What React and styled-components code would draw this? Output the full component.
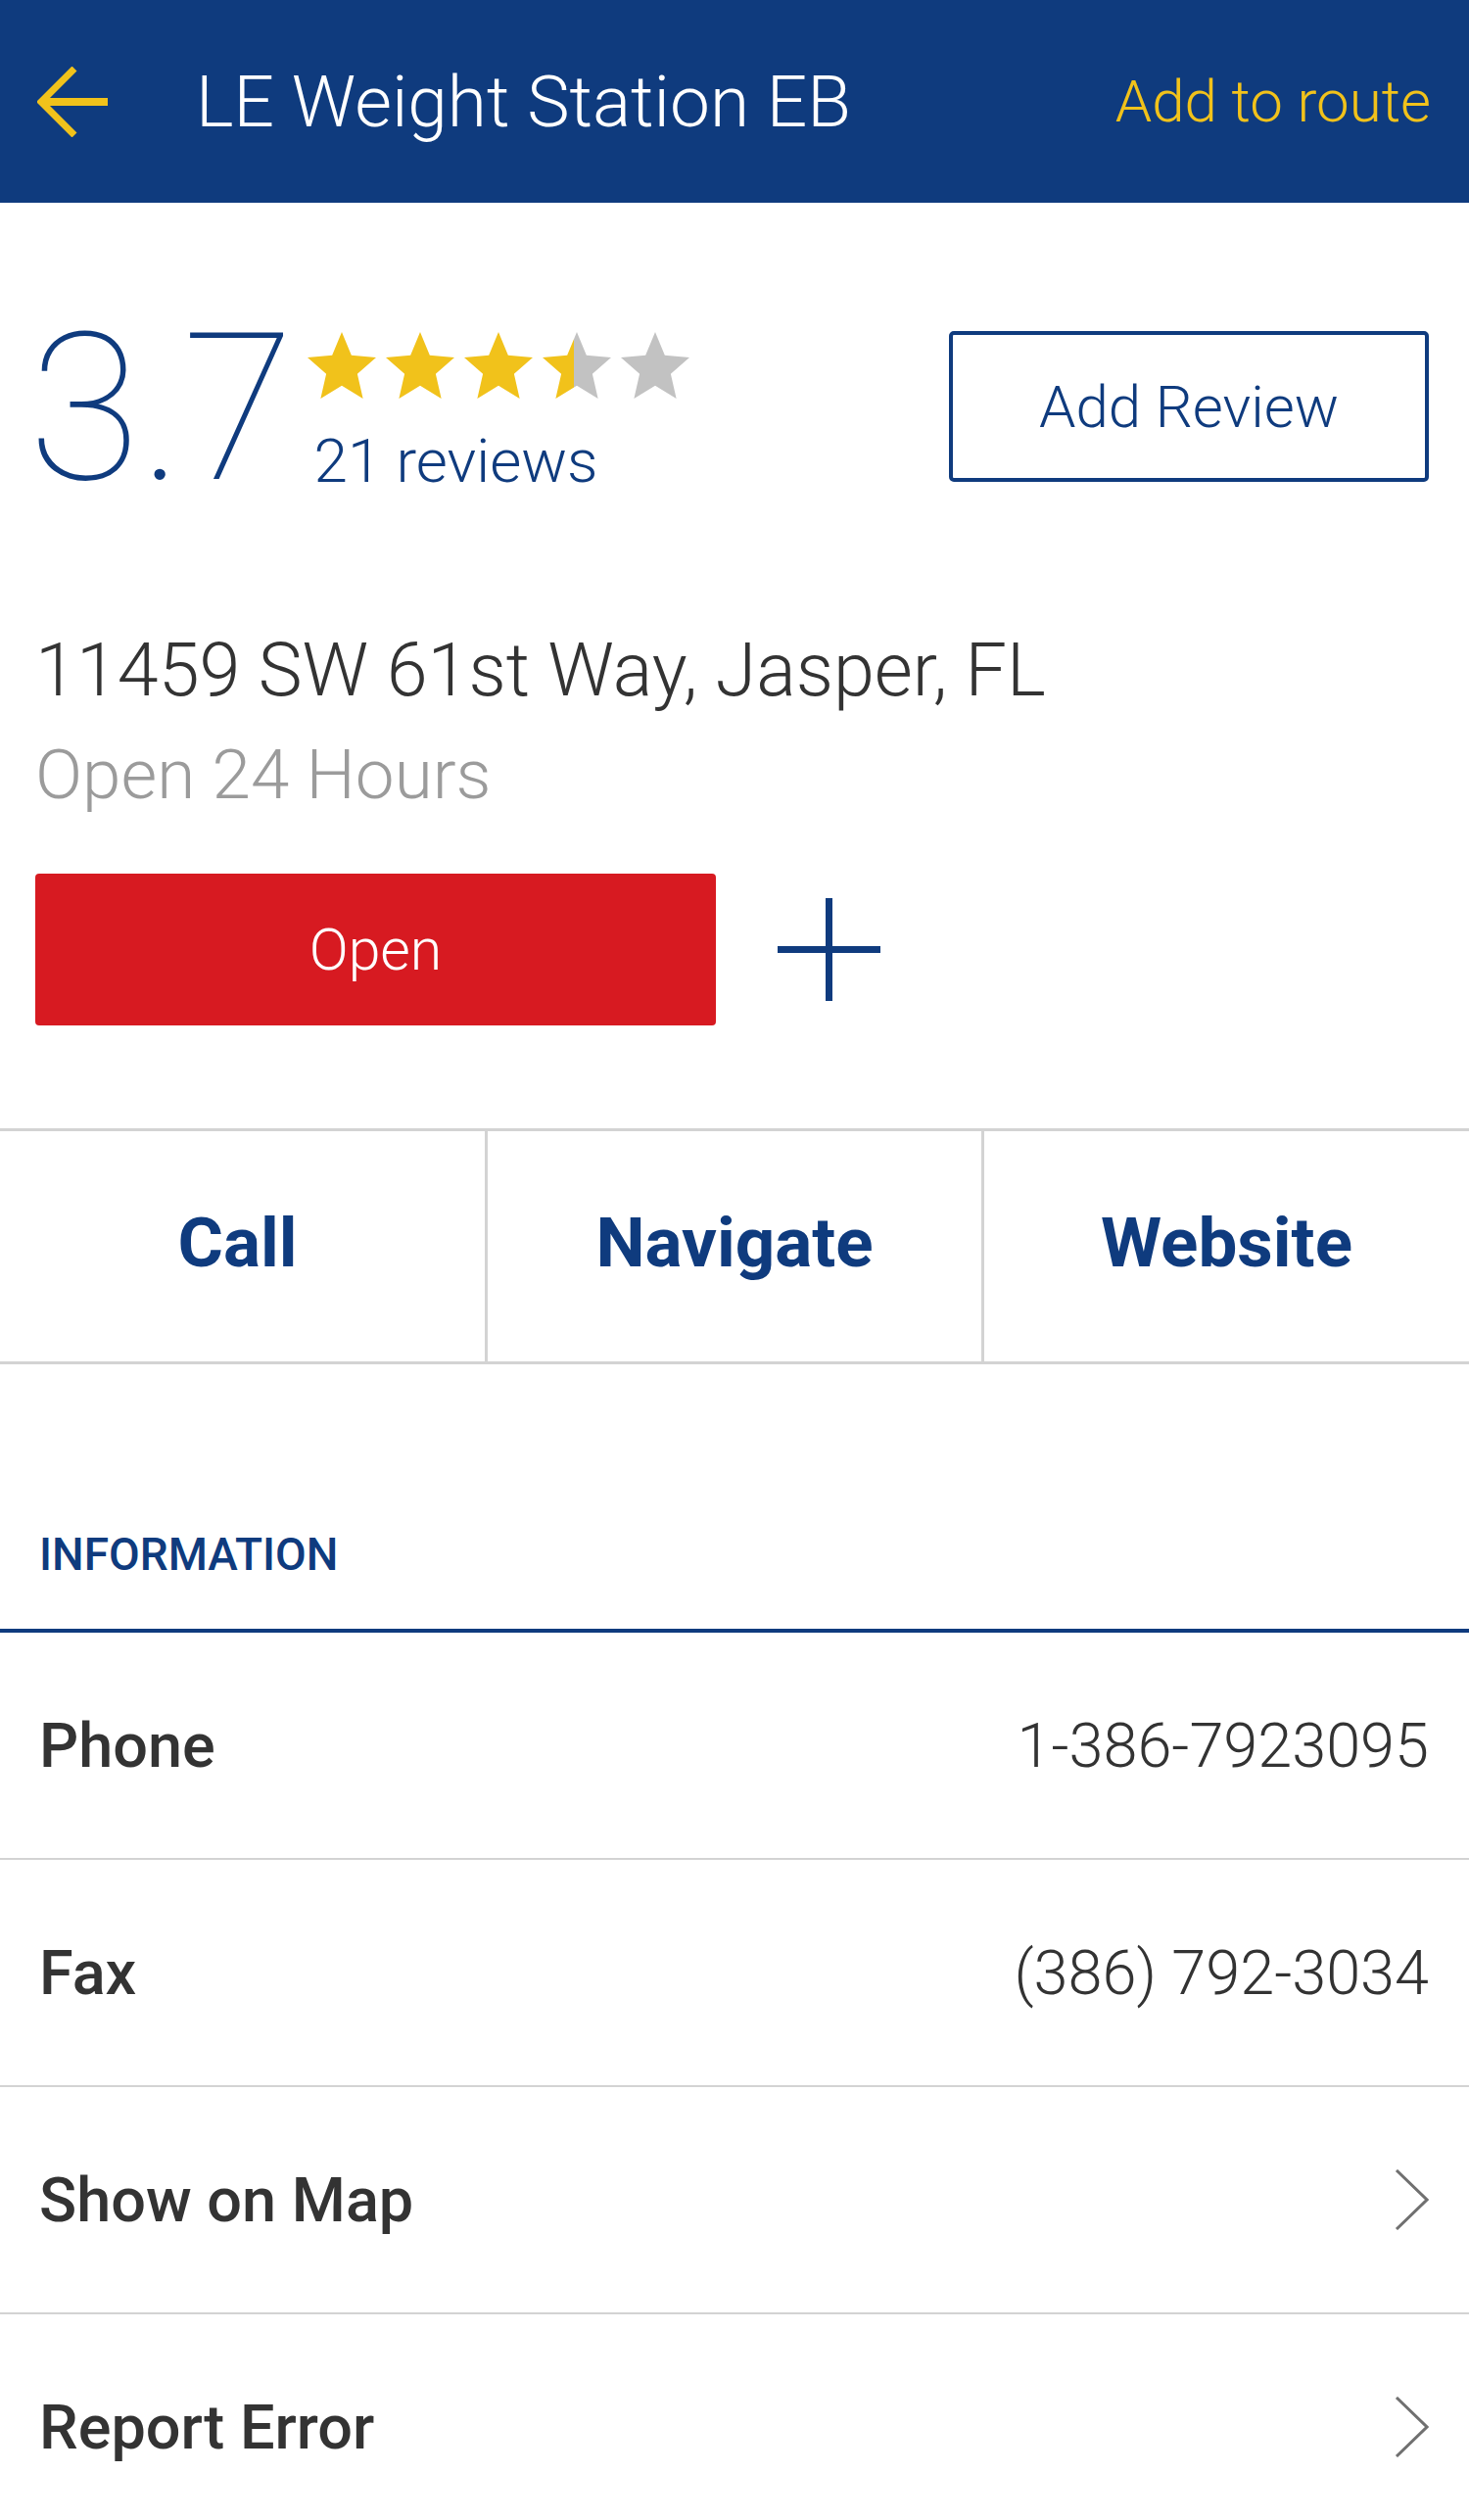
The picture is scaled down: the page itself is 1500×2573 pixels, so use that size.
import React from "react";
import styled, { createGlobalStyle } from "styled-components";

const BLUE = "#0f3b7e";
const YELLOW = "#f1c21b";
const GREY_LINE = "#d3d3d3";
const TEXT = "#333333";

const GlobalStyle = createGlobalStyle`
	body {
		margin: 0;
		background: #ffffff;
		font-family: Roboto, "Liberation Sans", sans-serif;
	}
`;

const Page = styled("div")`
	width: 1500px;
	background: #ffffff;
`;

const Header = styled("header")`
	height: 207px;
	background: ${BLUE};
	display: flex;
	align-items: center;
	padding: 0 39px 0 38px;
	box-sizing: border-box;
`;

const BackIcon = styled("svg")`
	width: 72px;
	height: 72px;
	margin-right: 90px;
	flex-shrink: 0;
`;

const Title = styled("h1")`
	flex: 1;
	margin: 0;
	color: #ffffff;
	font-size: 73px;
	font-weight: 300;
	white-space: nowrap;
`;

const RouteLink = styled("span")`
	color: ${YELLOW};
	font-size: 60px;
	font-weight: 300;
	white-space: nowrap;
`;

const Summary = styled("section")`
	padding: 103px 41px 0 36px;
`;

const RatingRow = styled("div")`
	display: flex;
	justify-content: space-between;
	align-items: flex-start;
`;

const RatingGroup = styled("div")`
	display: flex;
	align-items: flex-start;
`;

const Score = styled("div")`
	margin-left: -7px;
	color: ${BLUE};
	font-size: 209px;
	line-height: 216px;
	font-weight: 100;
	letter-spacing: -1px;
`;

const StarsBlock = styled("div")`
	margin-top: 29px;
	margin-left: 14px;
`;

const StarRow = styled("div")`
	display: flex;
	gap: 10px;
`;

const ReviewCount = styled("div")`
	margin-top: 33px;
	padding-left: 7px;
	color: ${BLUE};
	font-size: 62px;
	line-height: 62px;
	font-weight: 300;
`;

const AddReviewButton = styled("button")`
	margin-top: 28px;
	width: 490px;
	height: 154px;
	border: 4px solid ${BLUE};
	border-radius: 5px;
	background: #ffffff;
	color: ${BLUE};
	font-family: Roboto, sans-serif;
	font-size: 60px;
	font-weight: 300;
`;

const Address = styled("div")`
	margin-top: 116px;
	color: ${TEXT};
	font-size: 75.5px;
	line-height: 84px;
	font-weight: 300;
`;

const Hours = styled("div")`
	margin-top: 23px;
	color: #9b9b9b;
	font-size: 71px;
	line-height: 84px;
	font-weight: 300;
`;

const StatusRow = styled("div")`
	margin-top: 59px;
	display: flex;
	align-items: center;
	gap: 63px;
`;

const StatusButton = styled("button")`
	width: 695px;
	height: 155px;
	border: none;
	border-radius: 4px;
	background: #d71a21;
	color: #ffffff;
	font-family: Roboto, sans-serif;
	font-size: 59px;
	font-weight: 300;
`;

const PlusIcon = styled("svg")`
	width: 105px;
	height: 105px;
`;

const ActionBar = styled("nav")`
	margin-top: 105px;
	height: 241px;
	box-sizing: border-box;
	display: grid;
	grid-template-columns: 495px 507px 1fr;
	border-top: 3px solid ${GREY_LINE};
	border-bottom: 3px solid ${GREY_LINE};
`;

const ActionCell = styled("div")`
	display: flex;
	align-items: center;
	justify-content: center;
	padding-bottom: 8px;
	color: ${BLUE};
	font-size: 71px;
	font-weight: 700;

	&:first-child {
		padding-right: 10px;
	}

	& + & {
		border-left: 3px solid ${GREY_LINE};
	}
`;

const SectionTitle = styled("h2")`
	margin: 0;
	padding: 168px 41px 50px 40px;
	color: ${BLUE};
	font-size: 46px;
	line-height: 52px;
	font-weight: 500;
	border-bottom: 4px solid ${BLUE};
`;

const InfoRow = styled("div")`
	height: 230px;
	display: flex;
	align-items: center;
	justify-content: space-between;
	padding: 0 41px 0 40px;

	& + & {
		border-top: 2px solid ${GREY_LINE};
	}
`;

const InfoLabel = styled("span")`
	color: ${TEXT};
	font-size: 63px;
	font-weight: 500;
`;

const InfoValue = styled("span")`
	color: ${TEXT};
	font-size: 63px;
	font-weight: 300;
`;

const Chevron = styled("svg")`
	width: 35px;
	height: 62px;
`;

function Star({ fill, id }) {
	const points =
		"12,17.27 18.18,21 16.54,13.97 22,9.24 14.81,8.62 12,2 9.19,8.62 2,9.24 7.46,13.97 5.82,21";
	return (
		<svg width="70" height="68" viewBox="2 2 20 19" preserveAspectRatio="none">
			<defs>
				<linearGradient id={id} x1="0" x2="1" y1="0" y2="0">
					<stop offset={fill} stopColor={YELLOW} />
					<stop offset={fill} stopColor="#c2c2c2" />
				</linearGradient>
			</defs>
			<polygon points={points} fill={`url(#${id})`} />
		</svg>
	);
}

function Stars({ rating }) {
	return (
		<StarRow>
			{[0, 1, 2, 3, 4].map((i) => {
				const part = Math.max(0, Math.min(1, rating - i));
				// the app shows a partial star a bit under its true share
				const fill = part > 0 && part < 1 ? 0.45 : part;
				return <Star key={i} id={`star-${i}`} fill={fill} />;
			})}
		</StarRow>
	);
}

const infoRows = [
	{ label: "Phone", value: "1-386-7923095" },
	{ label: "Fax", value: "(386) 792-3034" },
	{ label: "Show on Map", link: true },
	{ label: "Report Error", link: true },
];

export default function App() {
	return (
		<Page>
			<GlobalStyle />
			<Header>
				<BackIcon viewBox="0 0 72 72">
					<line x1="4" y1="36" x2="72" y2="36" stroke={YELLOW} strokeWidth="8" />
					<polyline
						points="38,2 4,36 38,70"
						fill="none"
						stroke={YELLOW}
						strokeWidth="7"
					/>
				</BackIcon>
				<Title>LE Weight Station EB</Title>
				<RouteLink>Add to route</RouteLink>
			</Header>

			<Summary>
				<RatingRow>
					<RatingGroup>
						<Score>3.7</Score>
						<StarsBlock>
							<Stars rating={3.7} />
							<ReviewCount>21 reviews</ReviewCount>
						</StarsBlock>
					</RatingGroup>
					<AddReviewButton>Add Review</AddReviewButton>
				</RatingRow>

				<Address>11459 SW 61st Way, Jasper, FL</Address>
				<Hours>Open 24 Hours</Hours>

				<StatusRow>
					<StatusButton>Open</StatusButton>
					<PlusIcon viewBox="0 0 105 105">
						<line x1="52.5" y1="0" x2="52.5" y2="105" stroke={BLUE} strokeWidth="7" />
						<line x1="0" y1="52.5" x2="105" y2="52.5" stroke={BLUE} strokeWidth="7" />
					</PlusIcon>
				</StatusRow>
			</Summary>

			<ActionBar>
				<ActionCell>Call</ActionCell>
				<ActionCell>Navigate</ActionCell>
				<ActionCell>Website</ActionCell>
			</ActionBar>

			<SectionTitle>INFORMATION</SectionTitle>

			{infoRows.map((row) => (
				<InfoRow key={row.label}>
					<InfoLabel>{row.label}</InfoLabel>
					{row.link ? (
						<Chevron viewBox="0 0 35 62">
							<polyline
								points="2,1 33,31 2,61"
								fill="none"
								stroke="#707070"
								strokeWidth="3"
							/>
						</Chevron>
					) : (
						<InfoValue>{row.value}</InfoValue>
					)}
				</InfoRow>
			))}
		</Page>
	);
}
